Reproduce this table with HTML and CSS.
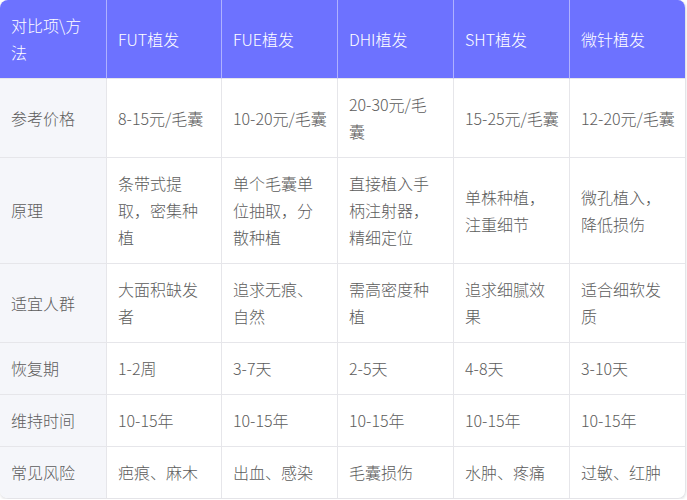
FILE: index.html
```html
<!DOCTYPE html>
<html lang="zh-CN">
<head>
<meta charset="utf-8">
<title>植发方法对比</title>
<link rel="stylesheet" href="styles.css">
</head>
<body>
<div class="card">
<table class="cmp">
<colgroup>
<col class="c0"><col class="c1"><col class="c2"><col class="c3"><col class="c4"><col class="c5">
</colgroup>
<thead>
<tr><th>对比项\方法</th><th>FUT植发</th><th>FUE植发</th><th>DHI植发</th><th>SHT植发</th><th>微针植发</th></tr>
</thead>
<tbody>
<tr><td>参考价格</td><td>8-15元/毛囊</td><td>10-20元/毛囊</td><td>20-30元/毛囊</td><td>15-25元/毛囊</td><td>12-20元/毛囊</td></tr>
<tr><td>原理</td><td>条带式提取，密集种植</td><td>单个毛囊单位抽取，分散种植</td><td>直接植入手柄注射器，精细定位</td><td>单株种植，注重细节</td><td>微孔植入，降低损伤</td></tr>
<tr><td>适宜人群</td><td>大面积缺发者</td><td>追求无痕、自然</td><td>需高密度种植</td><td>追求细腻效果</td><td>适合细软发质</td></tr>
<tr><td>恢复期</td><td>1-2周</td><td>3-7天</td><td>2-5天</td><td>4-8天</td><td>3-10天</td></tr>
<tr><td>维持时间</td><td>10-15年</td><td>10-15年</td><td>10-15年</td><td>10-15年</td><td>10-15年</td></tr>
<tr><td>常见风险</td><td>疤痕、麻木</td><td>出血、感染</td><td>毛囊损伤</td><td>水肿、疼痛</td><td>过敏、红肿</td></tr>
</tbody>
</table>
</div>
</body>
</html>
```
FILE: styles.css
```css
html, body {
  margin: 0;
  padding: 0;
  background: #ffffff;
}
body {
  font-family: "Noto Sans CJK SC", "Noto Sans", sans-serif;
  font-size: 16px;
  font-weight: 300;
  color: #5c5c5c;
}
.card {
  width: 686px;
  border-radius: 8px;
  overflow: hidden;
  box-shadow: 0 1px 3px rgba(0, 0, 0, 0.12);
  border: 1px solid #e4e4e8;
  border-top: none;
  border-left: none;
  box-sizing: border-box;
}
.cmp {
  width: 100%;
  table-layout: fixed;
  border-collapse: separate;
  border-spacing: 0;
}
.c0 { width: 107px; }
.c1 { width: 115px; }
.c2 { width: 116px; }
.c3 { width: 116px; }
.c4 { width: 116px; }
.c5 { width: 116px; }
.cmp th, .cmp td {
  padding: 12px 10px 12px 11px;
  line-height: 27px;
  text-align: left;
  vertical-align: middle;
  font-weight: 300;
  border-right: 1px solid #e6e6ea;
  border-bottom: 1px solid #e6e6ea;
}
.cmp th:nth-child(4), .cmp td:nth-child(4) {
  padding-right: 14px;
}
.cmp th:last-child, .cmp td:last-child {
  border-right: none;
}
.cmp tbody tr:last-child td {
  border-bottom: none;
}
.cmp th {
  background: #6d72ff;
  color: #ffffff;
  border-right-color: rgba(255, 255, 255, 0.45);
  border-bottom-color: #e6e6ea;
}
.cmp td:first-child {
  background: #f5f6fa;
}
```
